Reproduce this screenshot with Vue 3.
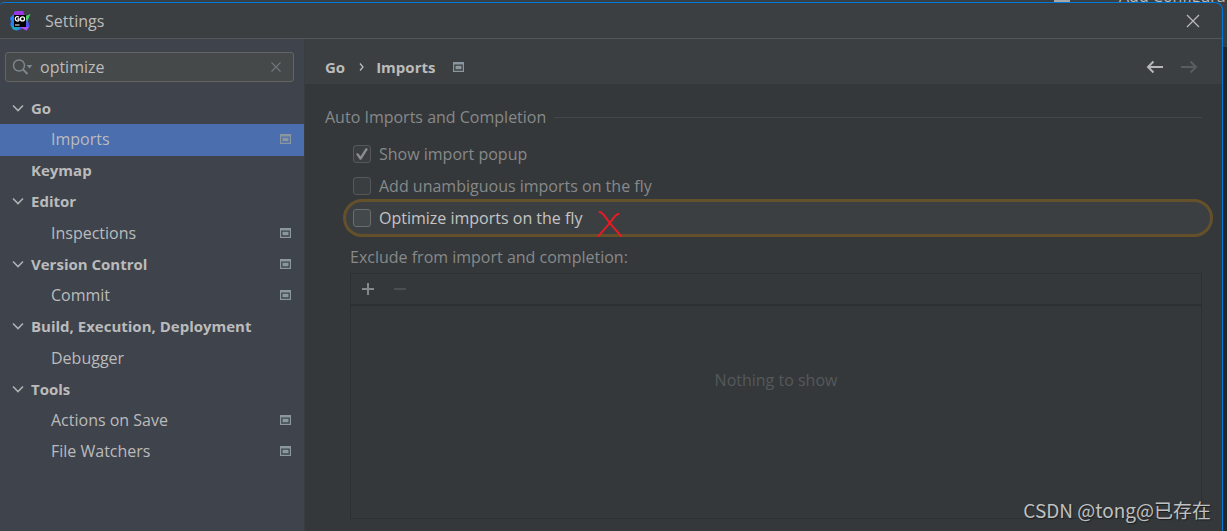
<script setup>
import { ref } from 'vue'

const query = ref('optimize')
const showPopup = ref(true)
const addImports = ref(false)
const optimizeImports = ref(false)

const rows = [
  { label: 'Go', group: true, open: true },
  { label: 'Imports', badge: true, selected: true },
  { label: 'Keymap', group: true },
  { label: 'Editor', group: true, open: true },
  { label: 'Inspections', badge: true },
  { label: 'Version Control', group: true, open: true, badge: true },
  { label: 'Commit', badge: true },
  { label: 'Build, Execution, Deployment', group: true, open: true },
  { label: 'Debugger' },
  { label: 'Tools', group: true, open: true },
  { label: 'Actions on Save', badge: true },
  { label: 'File Watchers', badge: true },
]
</script>

<template>
  <div class="desktop">
    <div class="behind" aria-hidden="true">
      <i class="behind-tool"></i>
      <span class="behind-text">Add Configura</span>
    </div>
    <div class="window">
      <header class="titlebar">
        <svg class="logo" width="22" height="22" viewBox="0 0 22 22" aria-hidden="true">
          <path d="M6 1h8l1.500 4 4 2-.5 4 1.500 5-3 4.500-4-2-4 2-4.500-1L1.500 15 2 11 1 8l3-3z" fill="#4a55f0" />
          <path d="M6 1h8l1.500 4.500h-11z" fill="#9b35e8" />
          <path d="M1 8l3-3 1 .5V16H1.500L2 11z" fill="#1f84f3" />
          <path d="M2 16h10l-2 3-2.500 1.500-3.500-1z" fill="#1fa6c4" />
          <path d="M12 17h8l-2.500 3.500-4-2z" fill="#b04bf0" />
          <path d="M15.500 6.500l6-2.500-3 6.500h-3z" fill="#44d45f" />
          <rect x="5" y="5" width="12" height="12" fill="#000" />
          <path d="M10 7.200C9 6.300 6.300 6.300 6.300 8.800s2.900 2.700 3.700 1.600V9H8.500" fill="none" stroke="#fff" stroke-width="1.300" />
          <circle cx="13.500" cy="8.900" r="2" fill="none" stroke="#fff" stroke-width="1.300" />
          <path d="M6 15h4.500" stroke="#fff" stroke-width="1.200" />
        </svg>
        <h1>Settings</h1>
        <button class="icon-btn close" aria-label="Close">
          <svg width="14" height="14" viewBox="0 0 14 14"><path d="M1 1l12 12M13 1L1 13" stroke="#b9bbbc" stroke-width="1.200" /></svg>
        </button>
      </header>

      <div class="body">
        <aside class="sidebar">
          <div class="search">
            <svg width="22" height="18" viewBox="0 0 22 18" aria-hidden="true">
              <circle cx="7" cy="7.500" r="5.500" fill="none" stroke="#7d8890" stroke-width="1.400" />
              <path d="M11 11.500l4.500 4.500" stroke="#7d8890" stroke-width="1.800" />
              <path d="M14.500 7h6l-3 3.500z" fill="#7d8890" />
            </svg>
            <input v-model="query" type="text" aria-label="Search settings" />
            <button class="icon-btn" aria-label="Clear search" @click="query = ''">
              <svg width="10" height="10" viewBox="0 0 10 10"><path d="M.5.5l9 9M9.500.5l-9 9" stroke="#70757a" stroke-width="1.200" /></svg>
            </button>
          </div>
          <nav class="tree" aria-label="Settings sections">
            <a v-for="row in rows" :key="row.label" href="#" class="row"
               :class="{ group: row.group, selected: row.selected }">
              <span class="arrow">
                <svg v-if="row.open" width="12" height="8" viewBox="0 0 12 8" aria-hidden="true">
                  <path d="M1 1.500l5 5 5-5" fill="none" stroke="#afb1b3" stroke-width="1.600" />
                </svg>
              </span>
              <span class="name">{{ row.label }}</span>
              <svg v-if="row.badge" class="badge" width="11" height="10" viewBox="0 0 11 10" aria-hidden="true">
                <path d="M0 0h11v10H0zM1.200 2.500v6.300h8.600V2.500z" fill="#8a979f" fill-rule="evenodd" />
                <path d="M2.500 3.700h6v3.600h-6z" fill="#8a979f" />
              </svg>
            </a>
          </nav>
        </aside>

        <main class="content">
          <div class="crumbs">
            <span>Go</span>
            <svg class="sep" width="5" height="8" viewBox="0 0 5 8" aria-hidden="true"><path d="M1 .5L4 4 1 7.500" fill="none" stroke="#b9bbbc" stroke-width="1.300" /></svg>
            <span>Imports</span>
            <svg class="crumb-badge" width="11" height="10" viewBox="0 0 11 10" aria-hidden="true">
              <path d="M0 0h11v10H0zM1.200 2.500v6.300h8.600V2.500z" fill="#8a979f" fill-rule="evenodd" />
              <path d="M2.500 3.700h6v3.600h-6z" fill="#8a979f" />
            </svg>
            <button class="icon-btn back" aria-label="Back">
              <svg width="18" height="14" viewBox="0 0 18 14"><path d="M17 7H2M7.500 1.500L2 7l5.500 5.500" fill="none" stroke="#b5b7b8" stroke-width="2" /></svg>
            </button>
            <button class="icon-btn" aria-label="Forward" disabled>
              <svg width="18" height="14" viewBox="0 0 18 14"><path d="M1 7h15M10.500 1.500L16 7l-5.500 5.500" fill="none" stroke="#5a5d5f" stroke-width="2" /></svg>
            </button>
          </div>

          <section class="panel">
            <h2>Auto Imports and Completion</h2>
            <label class="option"><input v-model="showPopup" type="checkbox" /><span>Show import popup</span></label>
            <label class="option"><input v-model="addImports" type="checkbox" /><span>Add unambiguous imports on the fly</span></label>
            <div class="spotlight">
              <label class="option"><input v-model="optimizeImports" type="checkbox" /><span>Optimize imports on the fly</span></label>
              <svg class="cross" width="26" height="28" viewBox="0 0 26 28" aria-hidden="true">
                <path d="M2.500 2c3 .5 4.500 3 7 6.500 4 6 9 11 14.500 17.500M21.500 4c-3 .5-5 4-8 8C9 18 5 21.500 1.500 26" fill="none" stroke="#e81b23" stroke-width="2" stroke-linecap="round" />
              </svg>
            </div>
            <p class="exclude">Exclude from import and completion:</p>
            <div class="list">
              <div class="toolbar">
                <button class="icon-btn" aria-label="Add">
                  <svg width="14" height="14" viewBox="0 0 14 14"><path d="M7 1v12M1 7h12" stroke="#858889" stroke-width="2" /></svg>
                </button>
                <button class="icon-btn" aria-label="Remove" disabled>
                  <svg width="14" height="14" viewBox="0 0 14 14"><path d="M1 7h12" stroke="#4b4e50" stroke-width="2" /></svg>
                </button>
              </div>
              <p class="empty">Nothing to show</p>
            </div>
          </section>
        </main>
      </div>
    </div>
    <div class="watermark">CSDN @tong@已存在</div>
  </div>
</template>

<style>
body { margin: 0; background: #2b2b2b; }
</style>

<style scoped>
* { box-sizing: border-box; }
.desktop {
  position: relative;
  display: flex;
  min-height: 100vh;
  padding: 2px 4px 0 0;
  background: linear-gradient(#3c3f41 47px, #242526 47px);
  font: 16px/20px "Open Sans", "Noto Sans", sans-serif;
  color: #bbbbbb;
}
.behind {
  position: absolute;
  top: 0;
  right: 0;
  width: 173px;
  height: 12px;
  overflow: hidden;
}
.behind-tool { position: absolute; left: 0; top: 0; width: 16px; height: 2px; background: #a5a7a9; }
.behind-text { position: absolute; left: 65px; top: -14px; white-space: nowrap; }
.window {
  position: relative;
  flex: 1;
  display: flex;
  flex-direction: column;
  min-width: 0;
  border-top: 1px solid #0078d7;
  border-right: 1px solid #0078d7;
  border-radius: 4px 8px 0 0;
  background: #3c3f41;
  overflow: hidden;
}
h1, h2, p { margin: 0; font: inherit; }
.icon-btn { display: flex; padding: 0; border: 0; background: none; }
.titlebar {
  display: flex;
  align-items: center;
  height: 36px;
  padding: 0 22px 0 9px;
  border-bottom: 1px solid #555759;
}
.titlebar h1 { margin-left: 14px; }
.close { margin-left: auto; }
.body { flex: 1; display: flex; }
.sidebar { flex: 0 0 305px; padding: 13px 0 0; background: #3f434c; border-right: 1px solid #393c41; }
.search {
  display: flex;
  align-items: center;
  height: 30px;
  margin: 0 10px 0 5px;
  padding: 0 12px 0 6px;
  border: 1px solid #646464;
  border-radius: 3px;
  background: #45494a;
}
.search input {
  flex: 1;
  min-width: 0;
  padding: 0 0 0 6px;
  border: 0;
  outline: 0;
  background: none;
  color: inherit;
  font: inherit;
}
.tree { display: grid; grid-auto-rows: 1fr; height: 375px; margin-top: 11px; }
.row {
  display: flex;
  align-items: center;
  padding: 0 13px 2px 12px;
  color: inherit;
  text-decoration: none;
}
.arrow { display: flex; width: 39px; }
.group .arrow { width: 19px; }
.group .name { font-size: 15px; font-weight: 700; }
.selected { background: #4b6eaf; }
.badge { margin-left: auto; }
.content { flex: 1; min-width: 0; display: flex; flex-direction: column; background: #34383a; }
.crumbs {
  display: flex;
  align-items: center;
  height: 45px;
  padding: 11px 24px 0 20px;
  background: #3c3f41;
  font-size: 15px;
  font-weight: 700;
}
.sep { margin: 0 12px 0 14px; }
.crumb-badge { margin-left: 18px; }
.back { margin: 0 16px 0 auto; }
.panel { flex: 1; display: flex; flex-direction: column; padding: 23px 20px 12px 20px; color: #87898a; }
h2 { display: flex; align-items: center; gap: 8px; }
h2::after { content: ""; flex: 1; height: 1px; background: #45484a; }
.option { display: flex; align-items: center; gap: 8px; height: 32px; margin-left: 28px; }
h2 + .option { margin-top: 11px; }
.option input {
  display: grid;
  place-items: center;
  appearance: none;
  width: 18px;
  height: 18px;
  margin: 0;
  border: 1px solid #54585a;
  border-radius: 3px;
  background: #3a3e40;
}
.option input:checked::before {
  content: "";
  width: 12px;
  height: 12px;
  background: #8a8c8d;
  clip-path: polygon(0 50%, 16% 42%, 38% 68%, 82% 0, 100% 8%, 44% 98%, 32% 98%);
}
.spotlight {
  position: relative;
  height: 38px;
  margin: -3px -11px 0 18px;
  border: 3px solid #64502a;
  border-radius: 19px;
  background: #3c3f41;
  color: #c4c5c6;
}
.spotlight .option { margin-left: 7px; }
.spotlight input { border-color: #6b6e6f; background: #43494a; }
.cross { position: absolute; left: 251px; top: 8px; }
.exclude { margin: 10px 0 6px 25px; }
.list {
  flex: 1;
  display: flex;
  flex-direction: column;
  min-height: 246px;
  margin-left: 25px;
  border: 1px solid #2d3032;
}
.toolbar {
  display: flex;
  align-items: center;
  gap: 18px;
  height: 32px;
  padding-left: 10px;
  border-bottom: 2px solid #2d3032;
}
.empty { padding-top: 64px; text-align: center; color: #55585a; }
.watermark {
  position: absolute;
  right: 16px;
  bottom: 7px;
  font: 19px/28px "Noto Sans CJK SC", sans-serif;
  color: #bfc0c1;
  text-shadow: 1px 1px 1px #1c1e1f;
}
</style>
